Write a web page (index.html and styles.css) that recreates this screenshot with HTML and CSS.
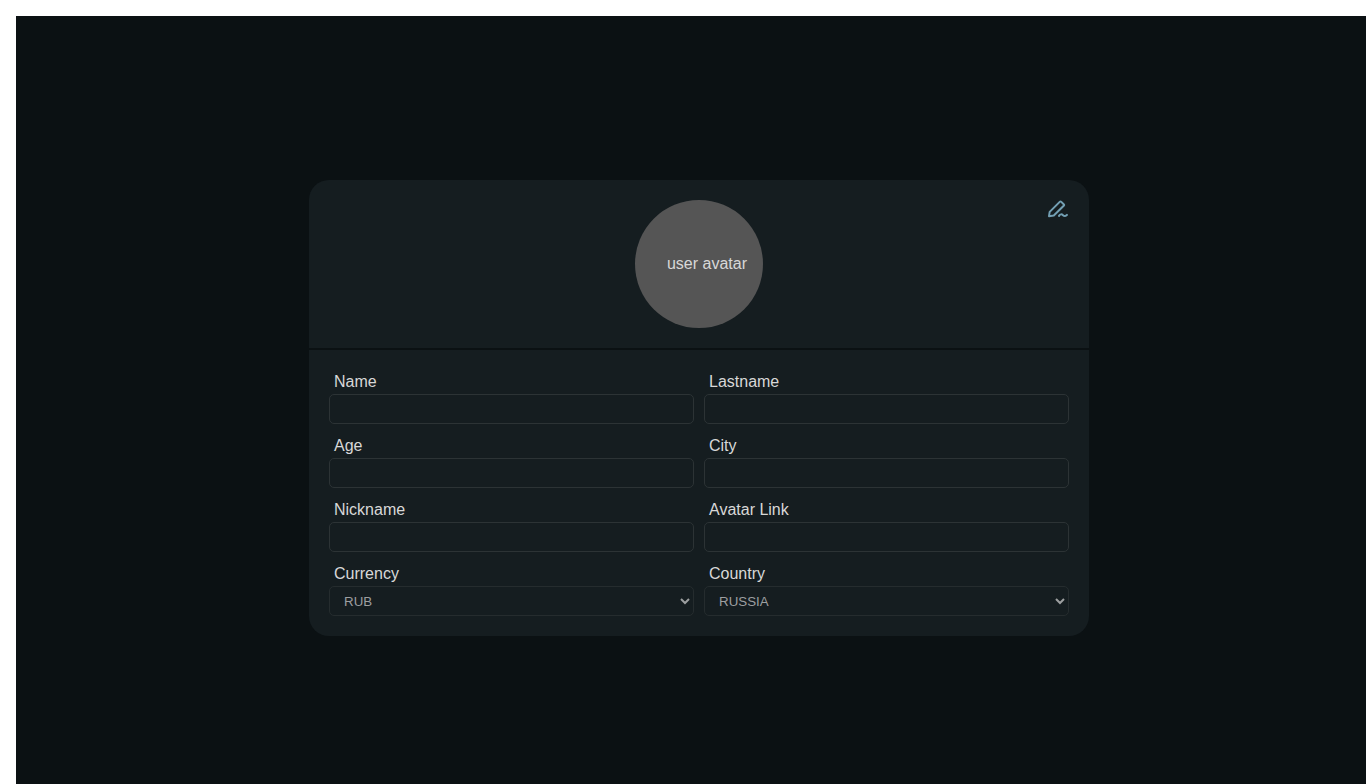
FILE: index.html
```html
<!DOCTYPE html>
<html lang="en">
<head>
<meta charset="utf-8">
<meta name="viewport" content="width=device-width, initial-scale=1">
<title>User profile</title>
<link rel="stylesheet" href="styles.css">
</head>
<body>
<main class="page">
  <section class="card">
    <header class="card-header">
      <div class="avatar" role="img" aria-label="user avatar">user avatar</div>
      <button class="edit" type="button" aria-label="Edit profile">
        <svg width="22" height="22" viewBox="0 0 22 22" fill="none" stroke="currentColor" stroke-width="2" stroke-linecap="round" stroke-linejoin="round" aria-hidden="true">
          <path d="M2 16.200L2.700 11.900L12.700 1.900Q13.500 1.100 14.300 1.900L16.700 4.200Q17.500 5 16.700 5.800L6.800 15.500Z"/>
          <path d="M12 15.900C13.200 14.100 14.700 13.900 16 15.200S18.800 16.300 20 14.900"/>
        </svg>
      </button>
    </header>
    <form class="fields">
      <div class="field"><label for="name">Name</label><input class="control" id="name" type="text"></div>
      <div class="field"><label for="lastname">Lastname</label><input class="control" id="lastname" type="text"></div>
      <div class="field"><label for="age">Age</label><input class="control" id="age" type="text"></div>
      <div class="field"><label for="city">City</label><input class="control" id="city" type="text"></div>
      <div class="field"><label for="nickname">Nickname</label><input class="control" id="nickname" type="text"></div>
      <div class="field"><label for="avatar">Avatar Link</label><input class="control" id="avatar" type="text"></div>
      <div class="field"><label for="currency">Currency</label><select class="control select" id="currency"><option>RUB</option></select></div>
      <div class="field"><label for="country">Country</label><select class="control select" id="country"><option>RUSSIA</option></select></div>
    </form>
  </section>
</main>
</body>
</html>
```
FILE: styles.css
```css
* {
  box-sizing: border-box;
}

body {
  margin: 0;
  padding: 16px 0 0 16px;
  height: 100vh;
  overflow: hidden;
  background: #fff;
  font-family: "Liberation Sans", Arial, sans-serif;
  font-size: 16px;
  color: #d8d8d8;
}

.page {
  display: flex;
  align-items: center;
  justify-content: center;
  width: 100vw;
  height: 100vh;
  background: #0b1113;
}

.card {
  width: 100%;
  max-width: 780px;
  border-radius: 20px;
  background: #151d20;
}

.card-header {
  display: grid;
  grid-template-columns: 1fr auto 1fr;
  padding: 20px;
  border-bottom: 2px solid #0b1113;
}

.avatar {
  grid-column: 2;
  display: flex;
  align-items: center;
  justify-content: center;
  width: 128px;
  height: 128px;
  padding-left: 16px;
  border-radius: 50%;
  background: #555;
}

.edit {
  justify-self: end;
  align-self: start;
  display: flex;
  padding: 0;
  border: 0;
  background: none;
  color: #729fb3;
  cursor: pointer;
}

.fields {
  display: grid;
  grid-template-columns: 1fr 1fr;
  gap: 10px;
  padding: 20px;
}

.field {
  display: flex;
  flex-direction: column;
}

.field label {
  padding-left: 5px;
  line-height: 24px;
}

.control {
  width: 100%;
  height: 30px;
  padding: 0 10px;
  border: 1px solid #2c3335;
  border-radius: 5px;
  background: transparent;
  color: #d8d8d8;
  font-family: inherit;
}

.select {
  border-color: #252c2e;
  padding-right: 0;
  color: #9d9fa0;
}

.select option {
  background: #151d20;
}
```
